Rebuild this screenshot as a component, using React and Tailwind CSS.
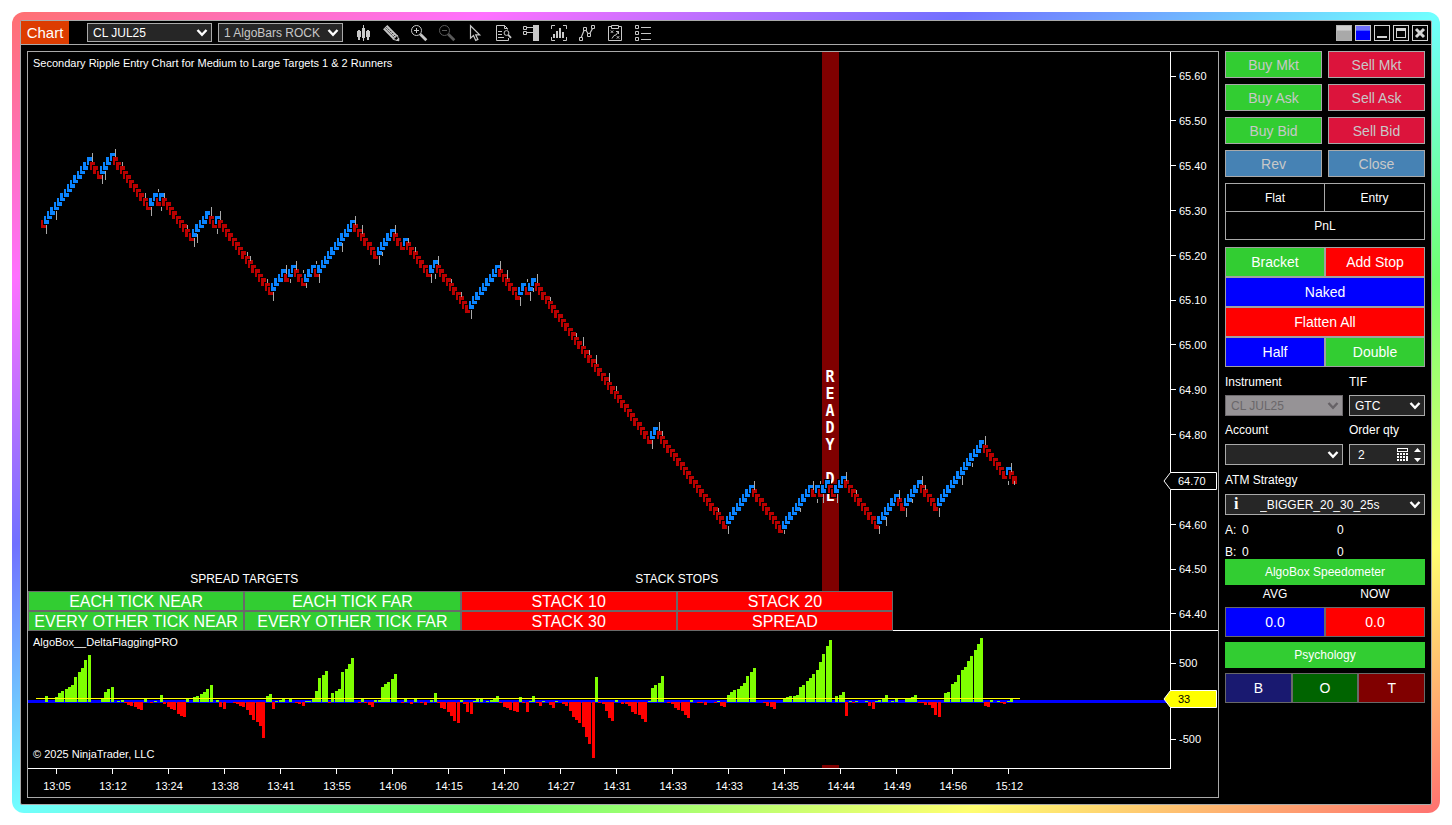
import React, { useState } from "react";

// number of bars in each leg, starting with an up leg
const LEGS = [
    14, 3, 4, 11, 2, 1, 1, 9, 5, 2, 1, 16, 4, 1, 2, 3, 3, 1, 11, 7, 5, 3, 1, 7, 2, 10, 9, 6, 2, 1, 2, 35,
    2, 21, 8, 9, 9, 1, 1, 1, 2, 2, 3, 10, 6, 2, 5, 5, 14, 7, 1, 2,
];

// [x, y, length]
const WICKS = [
    [46, 225, 9], [56, 211, 9], [92, 153, 9], [102, 175, 9], [105, 171, 9], [115, 149, 8], [122, 162, 4],
    [145, 193, 5], [151, 207, 9], [158, 189, 3], [161, 207, 4], [164, 193, 5], [187, 225, 4], [194, 238, 9],
    [197, 234, 9], [211, 207, 9], [217, 229, 5], [220, 211, 9], [247, 252, 4], [250, 256, 5], [267, 279, 4],
    [273, 292, 9], [286, 265, 9], [290, 279, 4], [296, 261, 9], [303, 270, 3], [306, 283, 5], [316, 261, 3],
    [319, 274, 9], [342, 243, 9], [355, 216, 9], [362, 225, 9], [379, 256, 9], [382, 252, 4], [395, 225, 9],
    [408, 238, 5], [415, 247, 5], [431, 274, 9], [435, 274, 5], [438, 256, 9], [451, 279, 4], [461, 292, 5],
    [471, 310, 9], [500, 261, 9], [507, 270, 9], [520, 297, 9], [527, 279, 3], [530, 292, 9], [533, 288, 4],
    [537, 274, 9], [550, 297, 4], [576, 333, 4], [583, 337, 9], [589, 350, 5], [596, 355, 9], [609, 373, 9],
    [616, 386, 5], [652, 440, 9], [659, 422, 9], [662, 431, 5], [718, 508, 4], [728, 526, 8], [754, 481, 9],
    [784, 530, 4], [800, 508, 4], [813, 481, 9], [817, 499, 4], [820, 481, 3], [823, 494, 9], [837, 494, 9],
    [846, 472, 9], [856, 490, 4], [879, 526, 8], [886, 517, 9], [899, 490, 9], [906, 508, 9], [912, 499, 4],
    [922, 476, 9], [925, 485, 5], [939, 508, 9], [962, 476, 9], [972, 463, 4], [985, 436, 9], [1008, 481, 4],
    [1011, 463, 9], [1014, 481, 4],
];

// [index of the first bar, heights...]
const DELTA = [
    [1, 6], [4, 5, 9, 11, 13, 15, 17, 25, 30, 34, 42, 47], [18, 3, 10, 13, 15],
    [23, 1, 2, -1, -3, -4, -5, -7, -8, 3], [33, -1, 1], [36, 7, -2, -5, -7, -8, -12, -14, -15, 3],
    [46, 5, 6, 8, 10, 13, 17], [53, 2, -5, -7], [58, -1, -2, -4, -5, -8, -13, -18, -20, -24, -36, 6, 8, -7, 1, 2, 3],
    [75, 3], [77, -1, -2, -4, 1, 1, 3, 11, 24, 27, 31, -1, 9, 11, 13, 30, 33, 38, 44],
    [96, -1, 3, -1, -3, -5, 2, 2, 15, 18, 20, 23, 28], [109, -1, 3], [112, -2, 3], [115, -1, -3],
    [118, 2, 9, -1, -6, -7, -10, -14, -19, -21, 2, -2, -10, -12, 1, 3, 3],
    [135, 1, 2, 3, 6, -1, -5, -6, -8, -9, -10, 5, -1, -10, 1, 6, -1, -4, 1], [154, -3, -6, 1],
    [158, -2, -4, -9, -15, -18, -21, -25, -35, -42, -56, 25, -1, -2, -9, -16, -19, 2],
    [176, -2, -2, -4, -10, -12, -13, -17, -20, 1, 14, 17, 19, 26], [190, -1, -2, -6, -8, -9, -13, -16, 2],
    [199, -1, -1, -3], [204, -1, 1, -4, -5, 7, 10, 12, 13, 16, 19, 26, 30, 34], [219, -1, -4, -5, -7],
    [225, 4, 5, 6, 6, 7, 15, 17, 21, 24, 28, 32, 40, 48, 56, 62], [241, 6, 7, 10, -14, 1, -1, 1],
    [250, 1, -4, -7, 1, 2, 3, 7], [258, 1, 3], [262, 3, 3, 5, 7, -1, -1, -3, -3, -6, -13, -15],
    [274, 9, 10, 18, 20, 27, 32, 35, 41, 46, 52, 58, 64, -4, -5, 2], [290, 1, -1, -2, 1, 3],
];

const PRICES = ["65.60", "65.50", "65.40", "65.30", "65.20", "65.10", "65.00", "64.90", "64.80", "64.70", "64.60", "64.50", "64.40"];

const TIMES = [
    "13:05", "13:12", "13:24", "13:38", "13:41", "13:55", "14:06", "14:15", "14:20",
    "14:27", "14:31", "14:33", "14:33", "14:35", "14:44", "14:49", "14:56", "15:12",
];

const STEP = 56 / 17;
const TICK = 4.49;

const buildBars = () => {
    const bars = [{ up: false, level: 0 }];
    let level = 0;
    LEGS.forEach((count, leg) => {
        const up = leg % 2 === 0;
        for (let i = 0; i < count; i++) {
            level += up ? 1 : -1;
            bars.push({ up, level });
        }
    });
    return bars.map((bar, i) => ({
        up: bar.up,
        x: Math.floor(41 + i * STEP),
        y: Math.round(220 - bar.level * TICK),
    }));
};

const BARS = buildBars();

const Chevron = ({ className = "" }) => (
    <svg className={`pointer-events-none absolute right-1 top-1/2 -translate-y-1/2 ${className}`} width="12" height="9" viewBox="0 0 12 9">
        <path d="M1.5 1.5 6 6.3 10.5 1.5" fill="none" stroke="currentColor" strokeWidth="2.4" />
    </svg>
);

const Select = ({ id, label, value, options, disabled, className = "", padding = "px-[5px]", color = "text-white" }) => (
    <div className={`relative ${className}`}>
        <select
            id={id}
            aria-label={label}
            defaultValue={value}
            disabled={disabled}
            className={`block h-full w-full appearance-none border text-[12px] leading-4 ${padding} ${disabled ? "border-[#6e6a6e] bg-[#969396] text-[#6a676a] opacity-100" : `border-[#a9a9a9] bg-[#262626] ${color}`
                }`}
        >
            {options.map((option) => (
                <option key={option}>{option}</option>
            ))}
        </select>
        <Chevron className={disabled ? "text-[#666266]" : "text-white"} />
    </div>
);

const TOOLS = [
    {
        name: "Bar style",
        art: (
            <path
                d="M2 6h4v6H2zM3 5h2v10H3zM7 3h3v10H7zM8 0h1v16H8zM11 6h4v6h-4zM12 5h2v10h-2z"
                fill="#c8c8c8"
                stroke="none"
                shapeRendering="crispEdges"
            />
        ),
    },
    {
        name: "Drawing tools",
        art: (
            <g>
                <path d="M2.2 2.2 12.3 12.3" strokeWidth="6" />
                <path d="M3.6 2.4 12.6 11.4M2.4 3.6 11.4 12.6" stroke="#000" strokeWidth="1" strokeDasharray="1.5 1.2" />
                <path d="M10.2 14.4 15.8 15.8 14.4 10.2z" fill="#000" />
                <path d="M13.6 15.4h2.2v-2.2z" fill="#c8c8c8" />
            </g>
        ),
    },
    {
        name: "Zoom in",
        art: (
            <g>
                <circle cx="5.5" cy="5.5" r="5" />
                <path d="M3 5.5h5M5.5 3v5" />
                <path d="M9.3 9.3 15.3 15.3" strokeWidth="2.8" />
            </g>
        ),
    },
    {
        name: "Zoom out",
        dim: true,
        art: (
            <g>
                <circle cx="5.5" cy="5.5" r="5" />
                <path d="M3 5.5h5" />
                <path d="M9.3 9.3 15.3 15.3" strokeWidth="2.8" />
            </g>
        ),
    },
    {
        name: "Cursor",
        art: <path d="M3.5.8v12.4l3-2.6 2.2 4.8 2.2-1-2.2-4.6h4z" strokeWidth="1.2" />,
    },
    {
        name: "Data box",
        art: (
            <g>
                <path d="M12.5 4.5v-1l-3-3h-8v15h12v-2.5M9.5.5v3h3M3 6.5h4M3 9.5h4M3 12.5h6" />
                <circle cx="11.5" cy="8" r="2.4" />
                <path d="M13.2 9.8 16 12.8" strokeWidth="1.8" />
            </g>
        ),
    },
    {
        name: "Chart trader",
        art: (
            <g>
                <path d="M.5 1.5h3v3h-3zM.5 6.5h3v3h-3zM4 2.5h6M4 7.5h6" />
                <path d="M10 0h6v16h-6z" fill="#c8c8c8" stroke="none" />
            </g>
        ),
    },
    {
        name: "Indicators",
        art: (
            <g>
                <path d="M.5 4V.5H4M12 .5h3.5V4M.5 12v3.5H4M12 15.5h3.5V12" />
                <path d="M2 9h2v4H2zM5 6h2v7H5zM8 3h2v10H8zM11 7h2v6h-2z" fill="#c8c8c8" stroke="none" />
            </g>
        ),
    },
    {
        name: "Strategies",
        art: (
            <g>
                <path d="M2.2 12.5 5.2 5M6.6 4.8 9.4 9M10.8 8.5 13.6 3.4" strokeWidth="1.2" />
                <path d="M.5 12.5h3v3h-3zM4.5 2.5h3v3h-3zM8.5 8.5h3v3h-3zM12.5.5h3v3h-3z" />
            </g>
        ),
    },
    {
        name: "Strategy analyzer",
        art: (
            <g>
                <path d="M4 1.5H1.5v14h13v-14H12M4.5.5h7v3h-7z" />
                <path d="m3.8 5.5 2.4 2.4M6.2 5.5 3.8 7.9M9.8 11.2l2.4 2.4M12.2 11.2l-2.4 2.4M5 13.5 7 10.5 9 10 11.5 6.5M9 6.5h2.5V9" />
            </g>
        ),
    },
    {
        name: "Properties",
        art: <path d="M.5.5h3v3h-3zM.5 6.5h3v3h-3zM.5 12.5h3v3h-3zM6 2.5h10M6 8.5h10M6 14.5h10" />,
    },
];

const TitleBar = () => (
    <header className="flex h-6 items-center border-b border-[#a9a9a9]">
        <h1 className="flex h-full w-12 items-center justify-center bg-[#dd3c00] pt-0.5 text-[15px] text-white">Chart</h1>
        <Select
            label="Instrument"
            value="CL JUL25"
            options={["CL JUL25"]}
            className="ml-[18px] h-[19px] w-[125px]"
        />
        <Select
            label="Interval"
            value="1 AlgoBars ROCK"
            options={["1 AlgoBars ROCK"]}
            className="ml-1.5 h-[19px] w-[125px]"
            color="text-[#c8c8c8]"
        />
        <nav className="ml-3 flex gap-3">
            {TOOLS.map((tool) => (
                <button key={tool.name} aria-label={tool.name} className={tool.dim ? "opacity-45" : ""}>
                    <svg width="16" height="16" viewBox="0 0 16 16" fill="none" stroke="#c8c8c8" className="block overflow-visible">
                        {tool.art}
                    </svg>
                </button>
            ))}
        </nav>
        <div className="ml-auto flex gap-[3px] pr-[3px]">
            <button aria-label="Link instrument" className="size-4 border border-[#b4b4b4] bg-linear-to-b from-[#d0d0d0] from-30% to-[#a9a9a9] to-40% bg-origin-border" />
            <button aria-label="Link interval" className="size-4 border border-[#c8c8c8] bg-linear-to-b from-[#7070ff] from-30% to-[#0000ff] to-40% bg-origin-border" />
            <button aria-label="Minimize" className="size-4 border border-[#d3d3d3]">
                <svg width="14" height="14" className="block"><path d="M2 10h10v2H2z" fill="#d3d3d3" /></svg>
            </button>
            <button aria-label="Maximize" className="size-4 border border-[#d3d3d3]">
                <svg width="14" height="14" className="block"><path d="M2 2h10v10H2zM3 5v6h8V5z" fill="#d3d3d3" fillRule="evenodd" /></svg>
            </button>
            <button aria-label="Close window" className="size-4 border border-[#d3d3d3]">
                <svg width="14" height="14" className="block"><path d="m3 3 8 8M11 3l-8 8" stroke="#d3d3d3" strokeWidth="3" /></svg>
            </button>
        </div>
    </header>
);

const PriceCanvas = () => (
    <svg viewBox="28 52 1142 578" preserveAspectRatio="none" shapeRendering="crispEdges" className="absolute inset-0 h-full w-full">
        <rect x="822" y="52" width="17" height="578" fill="#800000" />
        <g fill="#fff" textAnchor="middle" className="text-[15px] font-bold" fontFamily="'DejaVu Sans Mono', monospace">
            {"READY DL".split("").map((letter, i) => (
                <text key={i} x="830" y={382 + i * 17}>{letter}</text>
            ))}
        </g>
        {BARS.map((bar, i) => (
            <g key={i}>
                <rect x={bar.x - 1} y={bar.y - 1} width="7" height="10" fill="#000" />
                <rect x={bar.x} y={bar.y} width="5" height="8" fill={bar.up ? "#0a84ff" : "#b90000"} />
            </g>
        ))}
        {WICKS.map(([x, y, length]) => (
            <rect key={x} x={x} y={y} width="1" height={length} fill="#a9a9a9" />
        ))}
    </svg>
);

const DeltaCanvas = () => (
    <svg viewBox="28 631 1142 137" preserveAspectRatio="none" shapeRendering="crispEdges" className="absolute inset-0 h-full w-full">
        <rect x="28" y="700" width="1142" height="3" fill="#0000ff" />
        {DELTA.map(([start, ...values]) =>
            values.map((value, i) => (
                <rect
                    key={start + i}
                    x={Math.floor(42 + (start + i) * STEP)}
                    y={value > 0 ? 702 - value : 702}
                    width="3"
                    height={Math.abs(value)}
                    fill={value > 0 ? "#7fff00" : "#ff0000"}
                />
            ))
        )}
        <rect x="36" y="698" width="984" height="1" fill="#ffff00" />
        <rect x="822" y="765" width="17" height="3" fill="#800000" />
    </svg>
);

const AxisRow = ({ children }) => (
    <div className="flex h-4 items-center">
        <span className="mr-[3px] h-px w-[5px] bg-white" />
        <span className="pt-px">{children}</span>
    </div>
);

const PriceTag = ({ fill, className, children }) => (
    <div className={`absolute right-px h-[18px] w-[54px] ${className}`}>
        <svg width="54" height="18" className="absolute inset-0">
            <path d="M53.5.5H7.5L1 9l6.5 8.5h46z" fill={fill} stroke="#fff" />
        </svg>
        <span className="relative block pl-[15px] leading-[18px]">{children}</span>
    </div>
);

const StackButton = ({ color, children }) => (
    <button className={`h-5 border border-[#696969] pt-0.5 text-[16px] leading-4 whitespace-nowrap ${color}`}>{children}</button>
);

const Chart = () => (
    <section className="flex min-w-0 flex-1 flex-col border border-[#a9a9a9] text-[11px] text-white">
        <div className="flex flex-1 border-b border-white">
            <div className="relative flex min-w-0 flex-1 flex-col">
                <PriceCanvas />
                <p className="relative pl-[5px] pt-1 leading-[14px]">Secondary Ripple Entry Chart for Medium to Large Targets 1 &amp; 2 Runners</p>
                <div className="relative -mb-px mt-auto w-full max-w-[865px]">
                    <div className="grid grid-cols-2 pb-1 text-center text-[12px] leading-4">
                        <span>SPREAD TARGETS</span>
                        <span>STACK STOPS</span>
                    </div>
                    <div className="grid grid-cols-4">
                        <StackButton color="bg-[#32cd32]">EACH TICK NEAR</StackButton>
                        <StackButton color="bg-[#32cd32]">EACH TICK FAR</StackButton>
                        <StackButton color="bg-[#ff0000]">STACK 10</StackButton>
                        <StackButton color="bg-[#ff0000]">STACK 20</StackButton>
                        <StackButton color="bg-[#32cd32]">EVERY OTHER TICK NEAR</StackButton>
                        <StackButton color="bg-[#32cd32]">EVERY OTHER TICK FAR</StackButton>
                        <StackButton color="bg-[#ff0000]">STACK 30</StackButton>
                        <StackButton color="bg-[#ff0000]">SPREAD</StackButton>
                    </div>
                </div>
            </div>
            <div className="relative flex w-12 flex-col justify-between border-l border-white pb-2 pt-4">
                {PRICES.map((price) => (
                    <AxisRow key={price}>{price}</AxisRow>
                ))}
                <PriceTag fill="#000" className="top-[420px]">64.70</PriceTag>
            </div>
        </div>
        <div className="flex h-[138px]">
            <div className="relative flex min-w-0 flex-1 flex-col justify-between border-b border-white px-[5px] pb-[7px] pt-1 leading-[14px]">
                <DeltaCanvas />
                <p className="relative">AlgoBox__DeltaFlaggingPRO</p>
                <p className="relative">© 2025 NinjaTrader, LLC</p>
            </div>
            <div className="relative flex w-12 flex-col justify-between border-l border-white pb-[22px] pt-6">
                <AxisRow>500</AxisRow>
                <AxisRow>-500</AxisRow>
                <PriceTag fill="#ffff00" className="top-[59px] text-black">33</PriceTag>
            </div>
        </div>
        <div className="flex h-7 pr-12">
            <div className="flex w-[88.3%]">
                {TIMES.map((time, i) => (
                    <div key={i} className="flex flex-1 flex-col items-center">
                        <span className="mb-1 h-[5px] w-px bg-white" />
                        <span className="pl-0.5 leading-[17px]">{time}</span>
                    </div>
                ))}
            </div>
        </div>
    </section>
);

const OrderButton = ({ color, children }) => (
    <button className={`h-[27px] border border-[#a9a9a9] pt-0.5 text-[14px] text-[#c8c8c8] ${color}`}>{children}</button>
);

const ActionButton = ({ color, children }) => (
    <button className={`h-[30px] border border-[#a0a0a0] text-[14px] text-white ${color}`}>{children}</button>
);

const ChartTrader = () => {
    const [qty, setQty] = useState(2);

    return (
        <aside className="w-[200px] shrink-0 text-[12px] text-white">
            <div className="grid grid-cols-2 gap-1.5">
                <OrderButton color="bg-[#32cd32]">Buy Mkt</OrderButton>
                <OrderButton color="bg-[#dc143c]">Sell Mkt</OrderButton>
                <OrderButton color="bg-[#32cd32]">Buy Ask</OrderButton>
                <OrderButton color="bg-[#dc143c]">Sell Ask</OrderButton>
                <OrderButton color="bg-[#32cd32]">Buy Bid</OrderButton>
                <OrderButton color="bg-[#dc143c]">Sell Bid</OrderButton>
                <OrderButton color="bg-[#4682b4]">Rev</OrderButton>
                <OrderButton color="bg-[#4682b4]">Close</OrderButton>
            </div>

            <div className="mt-1.5 grid grid-cols-2 border border-[#a9a9a9] text-center leading-[26px]">
                <span className="border-r border-[#a9a9a9] pt-px">Flat</span>
                <span className="pt-px">Entry</span>
                <span className="col-span-2 border-t border-[#a9a9a9] pt-px">PnL</span>
            </div>

            <div className="mt-[7px] grid grid-cols-2">
                <ActionButton color="bg-[#32cd32]">Bracket</ActionButton>
                <ActionButton color="bg-[#ff0000]">Add Stop</ActionButton>
                <ActionButton color="col-span-2 bg-[#0000ff]">Naked</ActionButton>
                <ActionButton color="col-span-2 bg-[#ff0000]">Flatten All</ActionButton>
                <ActionButton color="bg-[#0000ff]">Half</ActionButton>
                <ActionButton color="bg-[#32cd32]">Double</ActionButton>
            </div>

            <div className="grid grid-cols-[118px_1fr] gap-x-1.5">
                <label htmlFor="instrument" className="flex h-7 items-center pt-0.5">Instrument</label>
                <label htmlFor="tif" className="flex h-7 items-center pt-0.5">TIF</label>
                <Select id="instrument" value="CL JUL25" options={["CL JUL25"]} disabled className="h-[21px]" />
                <Select id="tif" value="GTC" options={["GTC", "DAY"]} className="h-[21px]" />
                <label htmlFor="account" className="flex h-7 items-center">Account</label>
                <label htmlFor="qty" className="flex h-7 items-center">Order qty</label>
                <Select id="account" value="" options={[""]} className="h-[21px]" />
                <div className="flex h-[21px] items-center border border-[#a9a9a9] bg-[#262626] pr-[3px]">
                    <input
                        id="qty"
                        value={qty}
                        onChange={(e) => setQty(Number(e.target.value) || 0)}
                        className="w-0 flex-1 bg-transparent pl-2 text-[12px] outline-none"
                    />
                    <svg width="11" height="13" viewBox="0 0 11 13" shapeRendering="crispEdges" fill="#fff">
                        <path d="M0 0h11v4H0zM1 1v2h9V1z" fillRule="evenodd" />
                        <path d="M0 5h2v2H0zM3 5h2v2H3zM6 5h2v2H6zM9 5h2v2H9zM0 8h2v2H0zM3 8h2v2H3zM6 8h2v2H6zM9 8h2v5H9zM0 11h2v2H0zM3 11h2v2H3zM6 11h2v2H6z" />
                    </svg>
                    <div className="ml-1.5 flex flex-col gap-1.5">
                        <button aria-label="Increase" onClick={() => setQty(qty + 1)}>
                            <svg width="7" height="4" className="block"><path d="M0 4 3.5 0 7 4z" fill="#fff" /></svg>
                        </button>
                        <button aria-label="Decrease" onClick={() => setQty(qty - 1)}>
                            <svg width="7" height="4" className="block"><path d="M0 0 3.5 4 7 0z" fill="#fff" /></svg>
                        </button>
                    </div>
                </div>
            </div>

            <label htmlFor="atm" className="flex h-[29px] items-center">ATM Strategy</label>
            <div className="relative">
                <Select
                    id="atm"
                    value="_BIGGER_20_30_25s"
                    options={["_BIGGER_20_30_25s"]}
                    className="h-[21px]"
                    padding="pl-[34px]"
                />
                <span className="pointer-events-none absolute left-[9px] top-0.5 font-[Liberation_Serif,serif] text-[16px] font-bold leading-4">i</span>
            </div>

            <div className="grid grid-cols-[17px_95px_1fr] gap-y-2 pt-2 leading-[14px]">
                <span>A:</span><span>0</span><span>0</span>
                <span>B:</span><span>0</span><span>0</span>
            </div>

            <h2 className="bg-[#32cd32] text-center leading-[26px]">AlgoBox Speedometer</h2>
            <div className="grid grid-cols-2 text-center leading-[18px]">
                <span className="pb-1">AVG</span>
                <span className="pb-1">NOW</span>
                <output className="border border-[#696969] bg-[#0000ff] text-[14px] leading-7">0.0</output>
                <output className="border border-[#696969] bg-[#ff0000] text-[14px] leading-7">0.0</output>
            </div>

            <h2 className="mt-[5px] bg-[#32cd32] text-center leading-[26px]">Psychology</h2>
            <div className="mt-[5px] grid grid-cols-3 text-[14px]">
                <button className="h-[30px] border border-[#696969] bg-[#191970]">B</button>
                <button className="h-[30px] border border-[#696969] bg-[#006400]">O</button>
                <button className="h-[30px] border border-[#696969] bg-[#800000]">T</button>
            </div>
        </aside>
    );
};

const App = () => (
    <div className="flex min-h-screen bg-white p-3 font-[Liberation_Sans,Arial,sans-serif]">
        <div className="flex min-w-0 flex-1 rounded-xl bg-[linear-gradient(to_bottom_right,#ff7070,#ff70ff,#7070ff,#70ffff,#70ff70,#ffff70,#ff7070)] p-2">
            <main className="flex min-w-0 flex-1 flex-col rounded-xs border border-[#a9a9a9] bg-black">
                <TitleBar />
                <div className="flex flex-1 gap-1.5 p-1.5">
                    <Chart />
                    <ChartTrader />
                </div>
            </main>
        </div>
    </div>
);

export default App;
